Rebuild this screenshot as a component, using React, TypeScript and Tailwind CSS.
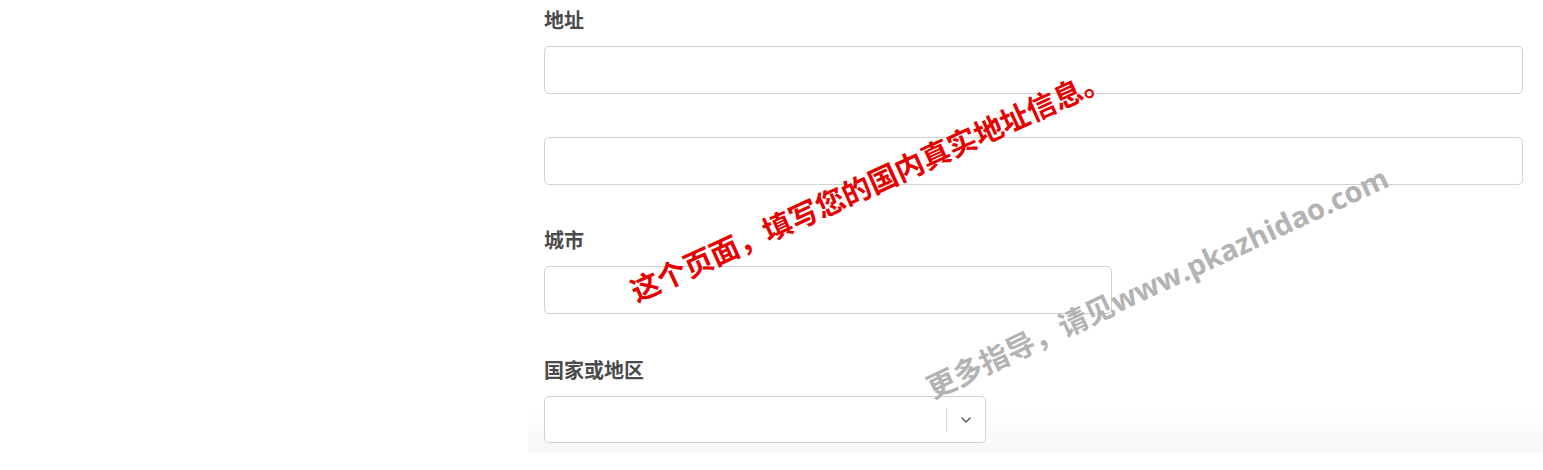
import React from "react";

const font = {
  fontFamily: '"Noto Sans", "Noto Sans CJK SC", sans-serif',
};

const Label: React.FC<{ text: string }> = ({ text }) => (
  <p className="text-[20px] leading-[24px] font-semibold text-[#4a4a4a]">{text}</p>
);

const TextBox: React.FC<{ width: string }> = ({ width }) => (
  <div className={`${width} h-[48px] rounded-[5px] border border-[#d2d2d2] bg-white`} />
);

export default function App() {
  return (
    <div className="relative w-[1543px] h-[470px] overflow-hidden bg-white" style={font}>
      {/* Formulario */}
      <div className="ml-[528px] pl-4 pt-[9px] pb-[10px] bg-gradient-to-b from-white from-90% to-[#f7f7f7]">
        <div className="flex flex-col w-[979px]">
          <Label text="地址" />
          <div className="mt-[13px]">
            <TextBox width="w-[979px]" />
          </div>
          <div className="mt-[43px]">
            <TextBox width="w-[979px]" />
          </div>

          <div className="mt-[44px]">
            <Label text="城市" />
          </div>
          <div className="mt-[13px]">
            <TextBox width="w-[568px]" />
          </div>

          <div className="mt-[45px]">
            <Label text="国家或地区" />
          </div>
          <div className="mt-[13px] w-[442px] h-[47px] rounded-[5px] border border-[#d2d2d2] bg-white flex items-center justify-end">
            <div className="w-px h-[24px] bg-[#dcdcdc]" />
            <div className="w-[38px] flex items-center justify-center">
              <svg width="10" height="6" viewBox="0 0 10 6" fill="none">
                <path d="M1 1l4 4 4-4" stroke="#555" strokeWidth="1.4" strokeLinecap="round" strokeLinejoin="round" />
              </svg>
            </div>
          </div>
        </div>
      </div>

      {/* Marcas superpuestas */}
      <div
        className="absolute left-[869px] top-[183px] -translate-x-1/2 -translate-y-1/2 -rotate-[24.5deg] whitespace-nowrap text-[29px] leading-none font-bold text-[#e60000]"
        style={{ fontFamily: '"Noto Sans CJK SC", sans-serif' }}
      >
        这个页面，填写您的国内真实地址信息。
      </div>
      <div
        className="absolute left-[1157px] top-[282px] -translate-x-1/2 -translate-y-1/2 -rotate-[25deg] whitespace-nowrap text-[29px] leading-none font-bold text-[#b3b3b3]"
        style={{ fontFamily: '"Open Sans", "Noto Sans CJK SC", sans-serif' }}
      >
        更多指导，请见www.pkazhidao.com
      </div>
    </div>
  );
}
